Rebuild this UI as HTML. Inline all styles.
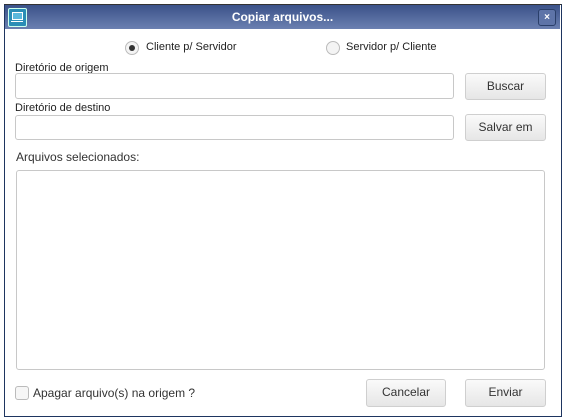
<!DOCTYPE html>
<html><head><style>
body{margin:0;width:567px;height:420px;background:#fff;position:relative;font-family:"Liberation Sans",sans-serif;overflow:hidden}
.a{position:absolute}
.win{left:4px;top:4px;width:556px;height:411px;border:1px solid #1e3560;border-top-color:#333;background:#fff}
.title{left:5px;top:5px;width:555px;height:24px;background:linear-gradient(#3b5289,#6b80b1);color:#fff;font-weight:bold;font-size:12px;text-align:center;line-height:24px}
.inp{border:1px solid #c8c8c8;border-radius:3px;background:#fff}
.btn{border:1px solid #cfcfcf;border-radius:3px;background:linear-gradient(#fafafa,#e6e6e6);font-size:12px;color:#333;text-align:center;line-height:25px}
.lbl{font-size:11px;color:#222}
.rad{width:12px;height:12px;border:1px solid #bbb;border-radius:50%;background:#f4f4f4}
</style></head><body>
<div class="a win"></div>
<div class="a title">Copiar arquivos...</div>
<div class="a" style="left:8px;top:8px;width:17px;height:17px;border:1px solid #cfe;border-radius:2px;background:#2a8db6"><div style="margin:3px 3px 0;width:9px;height:6px;border:1px solid #fff;background:#5bb8dc"></div><div style="margin:1px 2px;width:12px;height:1px;background:#fff"></div></div>
<div class="a" style="left:538px;top:9px;width:16px;height:15px;border:1px solid #2a3f6a;border-radius:3px;background:#5e74a8;color:#fff;font-size:10px;font-weight:bold;text-align:center;line-height:15px">×</div>
<div class="a rad" style="left:125px;top:41px"><div style="margin:3px;width:6px;height:6px;border-radius:50%;background:#333"></div></div>
<div class="a lbl" style="left:146px;top:41px">Cliente p/ Servidor</div>
<div class="a rad" style="left:326px;top:41px"></div>
<div class="a lbl" style="left:346px;top:41px">Servidor p/ Cliente</div>
<div class="a lbl" style="left:15px;top:62px">Diretório de origem</div>
<div class="a inp" style="left:15px;top:73px;width:437px;height:24px"></div>
<div class="a btn" style="left:465px;top:73px;width:79px;height:25px">Buscar</div>
<div class="a lbl" style="left:15px;top:102px">Diretório de destino</div>
<div class="a inp" style="left:15px;top:115px;width:437px;height:23px"></div>
<div class="a btn" style="left:465px;top:114px;width:79px;height:25px">Salvar em</div>
<div class="a" style="left:16px;top:150px;font-size:12px;color:#333">Arquivos selecionados:</div>
<div class="a inp" style="left:16px;top:170px;width:527px;height:198px"></div>
<div class="a" style="left:15px;top:386px;width:12px;height:12px;border:1px solid #bbb;border-radius:3px;background:#f6f6f6"></div>
<div class="a" style="left:33px;top:386px;font-size:12px;color:#333">Apagar arquivo(s) na origem ?</div>
<div class="a btn" style="left:366px;top:379px;width:78px;height:26px">Cancelar</div>
<div class="a btn" style="left:465px;top:379px;width:79px;height:26px">Enviar</div>
</body></html>
